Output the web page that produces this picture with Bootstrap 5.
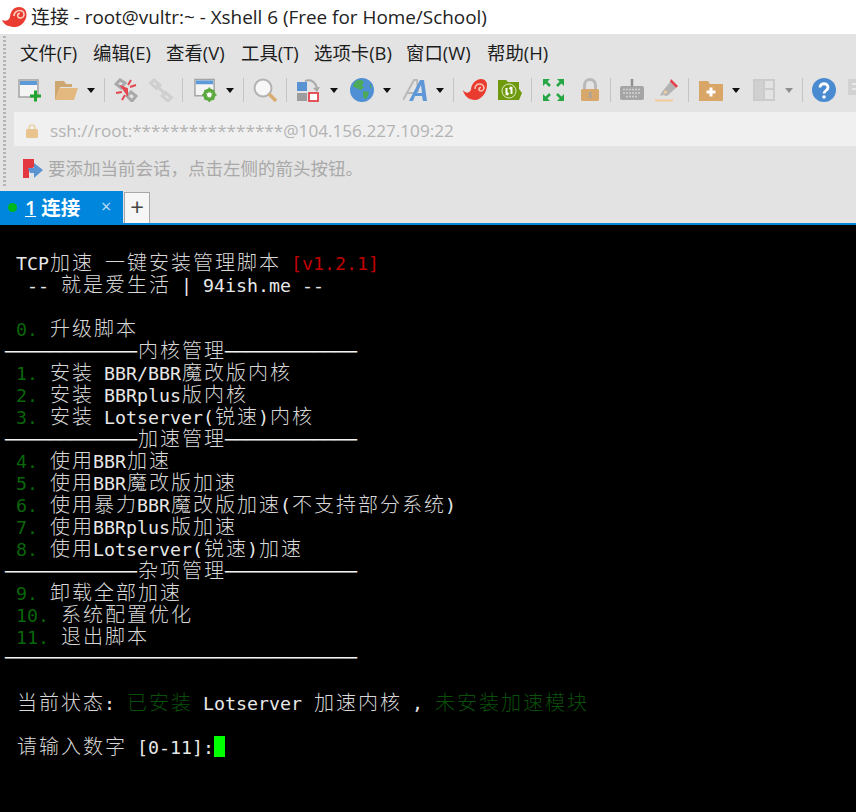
<!DOCTYPE html>
<html lang="zh">
<head>
<meta charset="utf-8">
<title>Xshell</title>
<link href="https://cdn.jsdelivr.net/npm/bootstrap@5.3.0/dist/css/bootstrap.min.css" rel="stylesheet">
<style>
html,body{height:100%;overflow:hidden;background:#000}
.shell{height:812px;width:856px;overflow:hidden;font-family:"Open Sans","Noto Sans CJK SC",sans-serif;color:#222}
.titlebar{height:34px;background:#fff;padding-left:2px;gap:4px;font-size:18.9px;line-height:34px;white-space:nowrap}
.chrome{background:#e3e3e3;position:relative}
.grip{position:absolute;left:3px;top:2px;height:150px;width:3px;background-image:repeating-linear-gradient(to bottom,#b5b5b5 0 2px,transparent 2px 4px)}
.menubar{height:36px;padding:2px 0 0 20px;font-size:18.4px;line-height:34px;white-space:nowrap}
.menubar span{color:#1c1c1c}
.m1{width:73px}.m2{width:73px}.m3{width:75px}.m4{width:73px}.m5{width:92px}.m6{width:81px}
.toolbar{height:40px;padding-left:18px;gap:9px;overflow:hidden}
.toolbar svg{flex:none;display:block}
.l1{margin-left:1px}.l2{margin-left:2px}.l3{margin-left:3px}.l4{margin-left:4px}.l6{margin-left:6px}
.vsep{flex:none;width:1px;height:24px;background:#c4c4c4}
.caret-b{flex:none;width:0;height:0;border-left:4px solid transparent;border-right:4px solid transparent;border-top:5px solid #111}
.caret-g{border-top-color:#8f8f8f}
.addr{height:34px;margin:2px 0 0 14px;background:#f0f0f0;padding:3px 0 0 12px;gap:12px;font-size:17.15px;color:#b3b3b3;white-space:nowrap}
.hint{height:45px;padding:0 0 0 22px;gap:4px;font-size:17.5px;color:#a9a9a9;white-space:nowrap}
.tabs{height:32px;background:#e3e3e3}
.tab-on{width:123px;height:32px;background:#0086dd;color:#fff;font-size:19.5px;font-weight:600;padding-left:8px;line-height:31px;position:relative}
.dot{width:9px;height:9px;border-radius:50%;background:#00b81c;margin-right:8px;flex:none}
.tab-x{position:absolute;left:101px;top:0;font-size:18px;color:#bfdcf3;font-weight:400}
.tab-plus{width:26px;height:31px;margin:1px 0 0 1px;background:#f6f6f6;border:1px solid #a8a8a8;border-bottom:0;color:#444;font-size:24px;line-height:28px;text-align:center}
.tabline{height:2px;background:#0086dd}
.term{height:587px;background:#000;padding:26px 0 0 5px;color:#e8e8e8;font-family:"DejaVu Sans Mono","Noto Sans CJK SC",monospace;font-size:18.27px;line-height:22px;overflow:hidden}
.term>div{height:22px;white-space:pre}
.hz{display:inline-block;height:22px;line-height:22px;margin:0 -1px 0 1px;font-family:"Noto Sans CJK SC",sans-serif;font-size:20px;font-weight:300;letter-spacing:2px;color:#d8d8d8}
.gn{color:#0a660a}.gd{color:#0a4f0a}.gd .hz{color:#0a4f0a}.rd{color:#c00000}
.rl{letter-spacing:0;color:#f2f2f2}
.cur{display:inline-block;width:11px;height:21px;margin-top:1px;background:#00ff00;vertical-align:top}
</style>
</head>
<body>
<div class="shell d-flex flex-column">
  <div class="titlebar d-flex align-items-center">
    <svg width="25" height="24" viewBox="0 0 25 24"><path d="M0 15c4 1.500 7 .5 8-3C8.500 6 12 2 17 2c4.500 0 7.500 3 7.500 7.500C24.500 16 19 22 13 22 7 22 2 20 0 15z" fill="#ea3b30"/><path d="M12 11c0-3 2.500-5.500 5.500-5.500s4.500 2 4.500 4-1.800 3.500-3.500 3.500-2.800-1-2.800-2.500 1-2.200 2.200-2.200" fill="none" stroke="#fbc9b8" stroke-width="1.700"/></svg>
    <span>连接 - root@vultr:~ - Xshell 6 (Free for Home/School)</span>
  </div>
  <div class="chrome">
    <div class="grip"></div>
    <div class="menubar d-flex">
      <span class="m1">文件(F)</span><span class="m2">编辑(E)</span><span class="m3">查看(V)</span><span class="m4">工具(T)</span><span class="m5">选项卡(B)</span><span class="m6">窗口(W)</span><span>帮助(H)</span>
    </div>
    <div class="toolbar d-flex align-items-center">
      <svg width="24" height="24" viewBox="0 0 24 24"><rect x="1" y="2" width="19" height="17" fill="#f4f4f4" stroke="#a3a3a3" stroke-width="1.500"/><rect x="2" y="3" width="17" height="4" fill="#5d9bd8"/><path d="M12 18h11M17.500 12.500v11" stroke="#22a52c" stroke-width="3"/></svg>
      <svg class="l3" width="24" height="24" viewBox="0 0 24 24"><path d="M1 3h9l2 3h6v3H6l-3 13H1z" fill="#cda672"/><path d="M5 10h19l-4 12H1z" fill="#e3b97f"/></svg>
      <div class="caret-b"></div>
      <div class="vsep"></div>
      <svg width="24" height="24" viewBox="0 0 24 24"><path d="M2 6l4-4 5 3-4 5zM13 18l4-4 5 4-4 5z" fill="none" stroke="#a9a9a9" stroke-width="3"/><path d="M8 9l5 2 0 5zM17 2l-3 5M22 7l-6 2M2 15l6-1M8 22l3-5" stroke="#e34750" stroke-width="2" fill="#e34750"/></svg>
      <svg class="l2" width="24" height="24" viewBox="0 0 24 24"><path d="M1.500 5l3.500-3 6 5-3.500 3.500zM13 18l3.500-3.500 6 5-3.500 3.500zM7 7l10 10" fill="none" stroke="#cfcfcf" stroke-width="3"/></svg>
      <div class="vsep"></div>
      <svg class="l2" width="23" height="24" viewBox="0 0 24 24"><rect x="1" y="1" width="20" height="17" fill="#f4f4f4" stroke="#a3a3a3" stroke-width="1.500"/><rect x="2" y="2" width="18" height="4" fill="#5d9bd8"/><circle cx="16" cy="17" r="5" fill="none" stroke="#5aa83c" stroke-width="3"/><path d="M16 9.500v15M8.500 17h15M11 12l10 10M21 12l-10 10" stroke="#5aa83c" stroke-width="1.800"/><circle cx="16" cy="17" r="2.500" fill="#fff"/></svg>
      <div class="caret-b"></div>
      <div class="vsep"></div>
      <svg width="24" height="24" viewBox="0 0 24 24"><circle cx="10" cy="10" r="8.500" fill="#f7f7f7" stroke="#b3b3b3" stroke-width="2"/><path d="M16 16l7 7" stroke="#d9ad72" stroke-width="3.500"/></svg>
      <div class="vsep"></div>
      <svg class="l1" width="24" height="24" viewBox="0 0 24 24"><rect x="0" y="4" width="10" height="9" fill="#5a93d2"/><rect x="0" y="15" width="10" height="8" fill="#9d9d9d"/><rect x="12" y="15" width="9" height="8" fill="#fff" stroke="#e2434b" stroke-width="1.800"/><path d="M8 3c6-2 11 1 12 8" fill="none" stroke="#a9a9a9" stroke-width="2"/><path d="M16 10l4 4 3-5z" fill="#a9a9a9"/></svg>
      <div class="caret-b"></div>
      <svg class="l3" width="24" height="24" viewBox="0 0 24 24"><circle cx="12" cy="12" r="12" fill="#4f8fd3"/><path d="M6 3c4-2 7-1 8 1l-2 3 2 2-3 3c-3-1-6-3-8-3 0-2 1-4 3-6zM13 13l6 1-2 6-3 1-1-4zM20 6l2 3-2 1z" fill="#4dab57"/></svg>
      <div class="caret-b"></div>
      <svg class="l3" width="24" height="24" viewBox="0 0 24 24"><path d="M0 22L11 2h3l1 12M4 15h10" fill="none" stroke="#b9b9b9" stroke-width="2"/><path d="M6 23L17 2h4l3 21h-4l-1-5h-7l-2 5zM14 15h5l-1-8z" fill="#5d97d8" fill-rule="evenodd"/></svg>
      <div class="caret-b"></div>
      <div class="vsep"></div>
      <svg width="24" height="24" viewBox="0 0 24 24"><path d="M0 12c3 4 6 3 8 0 0-6 5-11 10-11 4 0 6 3 6 6 0 8-6 15-12 15-6 0-11-4-12-10z" fill="#ea3b30"/><path d="M12 11c0-3 2-5 5-5 2 0 4 2 4 4s-2 3-3 3-2-1-2-2 1-1.500 2-1.500" fill="none" stroke="#f9c3b2" stroke-width="1.600"/></svg>
      <svg class="l2" width="24" height="24" viewBox="0 0 24 24"><path d="M0 2h8l2 2h11v7l3 4-3 7H0z" fill="#6f9a0e"/><circle cx="11" cy="13" r="7" fill="none" stroke="#dfeec5" stroke-width="1"/><path d="M8.500 17V10M13.500 16V9M8.500 17l2-2M13.500 9l-2 2" stroke="#fff" stroke-width="2" fill="none"/></svg>
      <div class="vsep"></div>
      <svg class="l1" width="23" height="24" viewBox="0 0 23 24"><path d="M1 1h7L1 8zM22 1h-7l7 7zM1 23h7L1 16zM22 23h-7l7-7z" fill="#26a744"/><path d="M3 3l5 5M20 3l-5 5M3 21l5-5M20 21l-5-5" stroke="#26a744" stroke-width="2.500"/></svg>
      <svg class="l6" width="20" height="24" viewBox="0 0 20 24"><path d="M4.500 11V7a5.500 5.500 0 0 1 11 0v4" fill="none" stroke="#b9b9b9" stroke-width="3"/><rect x="1" y="11" width="18" height="12" rx="1.500" fill="#d7a76b"/><rect x="9" y="14" width="2.500" height="6" fill="#a9a39a"/></svg>
      <div class="vsep l1"></div>
      <svg width="24" height="24" viewBox="0 0 24 24"><path d="M12 1v7" stroke="#8f8f8f" stroke-width="2.500"/><rect x="0" y="8" width="24" height="14" rx="2" fill="#a5a5a5"/><path d="M3 11.500h18M3 15h18M6 18.500h12" stroke="#d2d2d2" stroke-width="1.500" stroke-dasharray="2 1"/></svg>
      <svg class="l2" width="24" height="24" viewBox="0 0 24 24"><path d="M16 1l7 7-2 2-6-6z" fill="#e2434b"/><path d="M15 4l6 6-9 8-4-1-3 1 2-4z" fill="#b3b3b3"/><path d="M8 16l2-4 3 3z" fill="#f0cfa0"/><path d="M0 22.500h18" stroke="#f0cb98" stroke-width="2"/></svg>
      <div class="vsep"></div>
      <svg class="l1" width="24" height="24" viewBox="0 0 24 24"><path d="M0 3h9l2 3h13v17H0z" fill="#d9a668"/><path d="M12 9.500v9M7.500 14h9" stroke="#fff" stroke-width="3"/></svg>
      <div class="caret-b"></div>
      <svg class="l4" width="22" height="24" viewBox="0 0 22 24"><rect x="1" y="2" width="20" height="20" fill="#e3e3e3" stroke="#cbcbcb" stroke-width="2"/><path d="M11 2v20M11 11h10" stroke="#cbcbcb" stroke-width="2"/><rect x="2" y="3" width="8" height="18" fill="#d0d0d0"/></svg>
      <div class="caret-b caret-g l1"></div>
      <div class="vsep"></div>
      <svg width="24" height="24" viewBox="0 0 24 24"><circle cx="12" cy="12" r="12" fill="#4a8ad0"/><path d="M8 9.500c0-5 8-5 8 0 0 3-4 3-4 6" fill="none" stroke="#fff" stroke-width="2.800"/><circle cx="12" cy="19" r="1.800" fill="#fff"/></svg>
      <svg class="l2" width="24" height="24" viewBox="0 0 24 24"><path d="M1 1h22v16H13l-3 6v-6H1z" fill="#d2d2d2"/><path d="M5 6h14M5 11h14" stroke="#e9e9e9" stroke-width="2"/></svg>
    </div>
    <div class="addr d-flex align-items-center">
      <svg width="12" height="14" viewBox="0 0 12 14"><path d="M3 6V4a3 3 0 0 1 6 0v2" fill="none" stroke="#ecd2ab" stroke-width="1.600"/><rect y="5" width="12" height="9" rx="1.500" fill="#e9c48f"/></svg>
      <span>ssh://root:****************@104.156.227.109:22</span>
    </div>
    <div class="hint d-flex align-items-center">
      <svg width="22" height="20" viewBox="0 0 22 20"><path d="M1 0h11v8l-5 3v8H1z" fill="#e3383f"/><path d="M6 9h6V4l9 7-9 8v-5H8z" fill="#5b93d3"/></svg>
      <span>要添加当前会话，点击左侧的箭头按钮。</span>
    </div>
    <div class="tabs d-flex">
      <div class="tab-on d-flex align-items-center"><span class="dot"></span><span><u>1</u> 连接</span><span class="tab-x">×</span></div>
      <div class="tab-plus">+</div>
    </div>
  </div>
  <div class="tabline"></div>
  <div class="term">
<div> TCP<span class="hz">加速</span> <span class="hz">一键安装管理脚本</span> <span class="rd">[v1.2.1]</span></div>
<div>  -- <span class="hz">就是爱生活</span> | 94ish.me --</div>
<div></div>
<div> <span class="gn">0.</span> <span class="hz">升级脚本</span></div>
<div><span class="rl">────────────</span><span class="hz">内核管理</span><span class="rl">────────────</span></div>
<div> <span class="gn">1.</span> <span class="hz">安装</span> BBR/BBR<span class="hz">魔改版内核</span></div>
<div> <span class="gn">2.</span> <span class="hz">安装</span> BBRplus<span class="hz">版内核</span></div>
<div> <span class="gn">3.</span> <span class="hz">安装</span> Lotserver(<span class="hz">锐速</span>)<span class="hz">内核</span></div>
<div><span class="rl">────────────</span><span class="hz">加速管理</span><span class="rl">────────────</span></div>
<div> <span class="gn">4.</span> <span class="hz">使用</span>BBR<span class="hz">加速</span></div>
<div> <span class="gn">5.</span> <span class="hz">使用</span>BBR<span class="hz">魔改版加速</span></div>
<div> <span class="gn">6.</span> <span class="hz">使用暴力</span>BBR<span class="hz">魔改版加速</span>(<span class="hz">不支持部分系统</span>)</div>
<div> <span class="gn">7.</span> <span class="hz">使用</span>BBRplus<span class="hz">版加速</span></div>
<div> <span class="gn">8.</span> <span class="hz">使用</span>Lotserver(<span class="hz">锐速</span>)<span class="hz">加速</span></div>
<div><span class="rl">────────────</span><span class="hz">杂项管理</span><span class="rl">────────────</span></div>
<div> <span class="gn">9.</span> <span class="hz">卸载全部加速</span></div>
<div> <span class="gn">10.</span> <span class="hz">系统配置优化</span></div>
<div> <span class="gn">11.</span> <span class="hz">退出脚本</span></div>
<div><span class="rl">────────────────────────────────</span></div>
<div></div>
<div> <span class="hz">当前状态</span>: <span class="gd"><span class="hz">已安装</span></span> Lotserver <span class="hz">加速内核</span> , <span class="gd"><span class="hz">未安装加速模块</span></span></div>
<div></div>
<div> <span class="hz">请输入数字</span> [0-11]:<span class="cur"></span></div>
  </div>
</div>
<script src="https://cdn.jsdelivr.net/npm/bootstrap@5.3.0/dist/js/bootstrap.bundle.min.js"></script>
</body>
</html>
